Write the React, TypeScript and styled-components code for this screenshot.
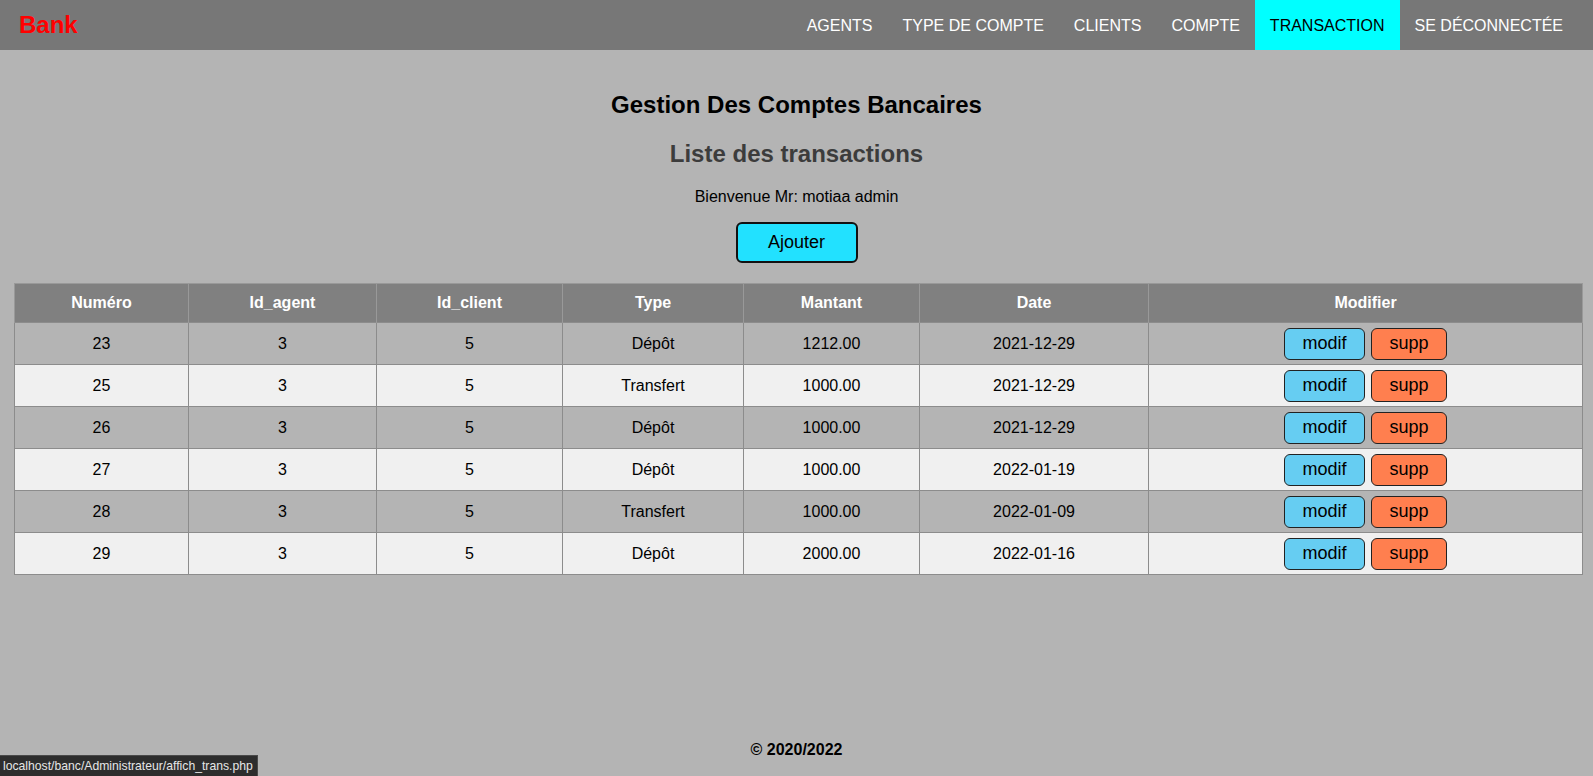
import React from "react";
import styled, { createGlobalStyle } from "styled-components";

const GlobalStyle = createGlobalStyle`
  html, body {
    margin: 0;
    padding: 0;
    background: #b4b4b4;
    font-family: "Liberation Sans", Arial, sans-serif;
  }
  * { box-sizing: border-box; }
`;

const Page = styled.div`
  min-height: 100vh;
  display: flex;
  flex-direction: column;
  background: #b4b4b4;
`;

const NavBar = styled.nav`
  height: 50px;
  background: #777777;
  display: flex;
  align-items: stretch;
  justify-content: space-between;
  padding: 0 15px 0 19px;
`;

const Logo = styled.a`
  color: #ff0000;
  font-weight: bold;
  font-size: 24px;
  display: flex;
  align-items: center;
  text-decoration: none;
`;

const NavList = styled.ul`
  list-style: none;
  margin: 0;
  padding: 0;
  display: flex;
  align-items: stretch;
`;

const NavItem = styled.li<{ $active?: boolean }>`
  display: flex;
  align-items: center;
  padding: 1px 15px 0;
  font-size: 16px;
  color: ${(p) => (p.$active ? "#000" : "#fff")};
  background: ${(p) => (p.$active ? "#00ffff" : "transparent")};
`;

const Main = styled.main`
  flex: 1;
  display: flex;
  flex-direction: column;
  align-items: center;
  padding-top: 41px;
`;

const Title = styled.h2<{ $muted?: boolean }>`
  font-size: 24px;
  font-weight: bold;
  line-height: 28px;
  margin: 0 0 ${(p) => (p.$muted ? "20px" : "21px")};
  color: ${(p) => (p.$muted ? "#3c3c3c" : "#000")};
  text-align: center;
`;

const Welcome = styled.p`
  margin: 0 0 16px;
  font-size: 16px;
  line-height: 18px;
  color: #000;
`;

const AddButton = styled.button`
  width: 122px;
  height: 41px;
  background: #22e1ff;
  border: 2px solid #111;
  border-radius: 6px;
  font-family: "Liberation Sans", Arial, sans-serif;
  font-size: 18px;
  color: #000;
  margin-bottom: 20px;
  padding: 0;
`;

const Table = styled.table`
  align-self: flex-start;
  margin-left: 14px;
  width: 1568px;
  border-collapse: collapse;
  table-layout: fixed;
  border: 1px solid #888;
`;

const HeadCell = styled.th`
  background: #808080;
  color: #fff;
  font-weight: bold;
  font-size: 16px;
  height: 39px;
  border: 1px solid #999;
  border-bottom: none;
  text-align: center;
  padding: 0;
`;

const Row = styled.tr<{ $light?: boolean }>`
  background: ${(p) => (p.$light ? "#f0f0f0" : "#b4b4b4")};
`;

const Cell = styled.td`
  height: 42px;
  font-size: 16px;
  color: #000;
  text-align: center;
  border: 1px solid #8c8c8c;
  padding: 0;
`;

const Actions = styled.div`
  display: flex;
  justify-content: center;
  gap: 6px;
`;

const ActionButton = styled.button<{ $kind: "edit" | "delete" }>`
  height: 32px;
  width: ${(p) => (p.$kind === "edit" ? "81px" : "76px")};
  background: ${(p) => (p.$kind === "edit" ? "#66cdf2" : "#ff7f4f")};
  border: 1px solid #222;
  border-radius: 6px;
  font-family: "Liberation Sans", Arial, sans-serif;
  font-size: 18px;
  color: #000;
  padding: 0;
`;

const Footer = styled.footer`
  text-align: center;
  font-weight: bold;
  font-size: 16px;
  line-height: 18px;
  padding-bottom: 17px;
  color: #000;
`;

const StatusBar = styled.div`
  position: fixed;
  left: 0;
  bottom: 0;
  height: 21px;
  padding: 0 4px 0 3px;
  background: #2d2d2d;
  border: 1px solid #4a4a4a;
  border-left: none;
  border-bottom: none;
  color: #e6e6e6;
  font-family: "Liberation Sans", Arial, sans-serif;
  font-size: 12.2px;
  display: flex;
  align-items: center;
`;

const columns = [
  { label: "Numéro", width: 174 },
  { label: "Id_agent", width: 188 },
  { label: "Id_client", width: 186 },
  { label: "Type", width: 181 },
  { label: "Mantant", width: 176 },
  { label: "Date", width: 229 },
  { label: "Modifier", width: 434 },
];

const rows = [
  { num: 23, agent: 3, client: 5, type: "Dépôt", amount: "1212.00", date: "2021-12-29" },
  { num: 25, agent: 3, client: 5, type: "Transfert", amount: "1000.00", date: "2021-12-29" },
  { num: 26, agent: 3, client: 5, type: "Dépôt", amount: "1000.00", date: "2021-12-29" },
  { num: 27, agent: 3, client: 5, type: "Dépôt", amount: "1000.00", date: "2022-01-19" },
  { num: 28, agent: 3, client: 5, type: "Transfert", amount: "1000.00", date: "2022-01-09" },
  { num: 29, agent: 3, client: 5, type: "Dépôt", amount: "2000.00", date: "2022-01-16" },
];

const navItems = ["AGENTS", "TYPE DE COMPTE", "CLIENTS", "COMPTE", "TRANSACTION", "SE DÉCONNECTÉE"];

export default function App() {
  return (
    <>
      <GlobalStyle />
      <Page>
        <NavBar>
          <Logo>Bank</Logo>
          <NavList>
            {navItems.map((item) => (
              <NavItem key={item} $active={item === "TRANSACTION"}>
                {item}
              </NavItem>
            ))}
          </NavList>
        </NavBar>
        <Main>
          <Title>Gestion Des Comptes Bancaires</Title>
          <Title $muted>Liste des transactions</Title>
          <Welcome>Bienvenue Mr: motiaa admin</Welcome>
          <AddButton>Ajouter</AddButton>
          <Table>
            <colgroup>
              {columns.map((c) => (
                <col key={c.label} style={{ width: c.width }} />
              ))}
            </colgroup>
            <thead>
              <tr>
                {columns.map((c) => (
                  <HeadCell key={c.label}>{c.label}</HeadCell>
                ))}
              </tr>
            </thead>
            <tbody>
              {rows.map((r, i) => (
                <Row key={r.num} $light={i % 2 === 1}>
                  <Cell>{r.num}</Cell>
                  <Cell>{r.agent}</Cell>
                  <Cell>{r.client}</Cell>
                  <Cell>{r.type}</Cell>
                  <Cell>{r.amount}</Cell>
                  <Cell>{r.date}</Cell>
                  <Cell>
                    <Actions>
                      <ActionButton $kind="edit">modif</ActionButton>
                      <ActionButton $kind="delete">supp</ActionButton>
                    </Actions>
                  </Cell>
                </Row>
              ))}
            </tbody>
          </Table>
        </Main>
        <Footer>© 2020/2022</Footer>
        <StatusBar>localhost/banc/Administrateur/affich_trans.php</StatusBar>
      </Page>
    </>
  );
}
